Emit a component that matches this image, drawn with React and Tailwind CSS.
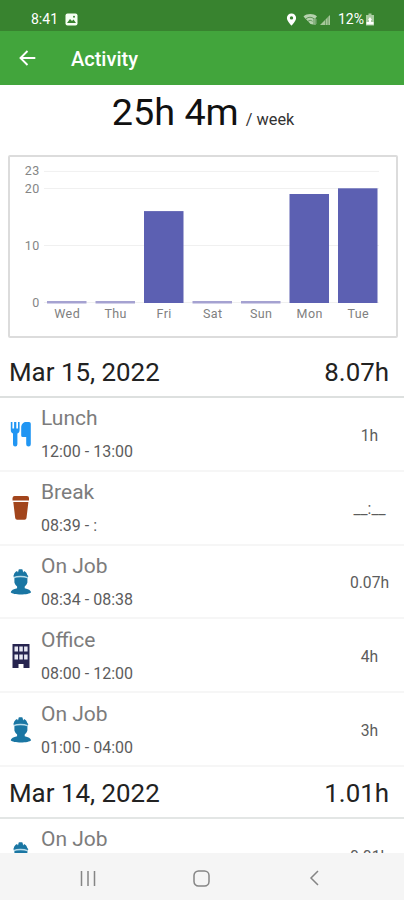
import { useState } from "react";

const week = [
  { day: "Wed", hours: 0 },
  { day: "Thu", hours: 0 },
  { day: "Fri", hours: 16 },
  { day: "Sat", hours: 0 },
  { day: "Sun", hours: 0 },
  { day: "Mon", hours: 19 },
  { day: "Tue", hours: 20 },
];

const days = [
  {
    date: "Mar 15, 2022",
    total: "8.07h",
    items: [
      { type: "lunch", name: "Lunch", time: "12:00 - 13:00", hours: "1h" },
      { type: "break", name: "Break", time: "08:39 - :", hours: "__:__" },
      { type: "job", name: "On Job", time: "08:34 - 08:38", hours: "0.07h" },
      { type: "office", name: "Office", time: "08:00 - 12:00", hours: "4h" },
      { type: "job", name: "On Job", time: "01:00 - 04:00", hours: "3h" },
    ],
  },
  {
    date: "Mar 14, 2022",
    total: "1.01h",
    items: [{ type: "job", name: "On Job", time: "", hours: "0.01h" }],
  },
];

function ActivityIcon({ type }) {
  if (type === "lunch") {
    return (
      <svg width="22" height="26" viewBox="0 0 22 26" fill="#2196f3">
        <path d="M.8 1h1.600v6.500h1.700V1h2.200v6.500H8V1h1.600v7.700c0 2.300-.8 3.300-2.200 3.900v10.600a2.200 2.200 0 0 1-4.400 0V12.600C1.600 12 .8 11 .8 8.700z" />
        <path d="M16 1h3a1.800 1.800 0 0 1 1.800 1.800v20.400a2.300 2.300 0 0 1-4.600 0V16h-3.500a1.500 1.500 0 0 1-1.500-1.500V6.500C11.200 3.500 13 1 16 1z" />
      </svg>
    );
  }
  if (type === "break") {
    return (
      <svg width="22" height="26" viewBox="0 0 22 26" fill="#a2451c">
        <path d="M5 1h12a2 2 0 0 1 2 2v2.600H2.500V3A2.300 2.300 0 0 1 5 1z" />
        <path d="M3.300 7.100h15.100L16.500 23a2 2 0 0 1-2 1.800H7.200a2 2 0 0 1-2-1.800z" />
      </svg>
    );
  }
  if (type === "office") {
    return (
      <svg width="22" height="26" viewBox="0 0 22 26">
        <path d="M2.500 1h17v24h-6v-4h-5v4h-6z" fill="#26244f" />
        <path d="M4.500 3.500H8v5H4.500zM9.300 3.500h3.500v5H9.300zM14.100 3.500h3.500v5h-3.500zM4.500 11.500H8v5H4.500zM9.300 11.500h3.500v5H9.300zM14.100 11.500h3.500v5h-3.500z" fill="#e8e9f3" />
      </svg>
    );
  }
  return (
    <svg width="22" height="26" viewBox="0 0 22 26" fill="#1a76a3">
      <path d="M3.800 6C4.300 3.800 5.600 2.600 7.100 2L8 3.600 8.700.6c.8-.5 3-.5 3.800 0l.7 3 .9-1.600c1.600.7 2.800 2 3.200 4l1.100 1.300-1 1v5.200c-.5 2-1.800 3.200-2.700 4.100v1.600c3.600.7 6.100 2.200 6.400 4-2 3-18.500 3-20.400 0 .3-1.900 2.800-3.300 6.400-4v-1.600c-.9-.9-2.200-2.100-2.700-4.100V8.300l-1.100-1z" />
      <path d="M3.700 8.600c3.500-1.500 10.200-1.500 13.700 0" fill="none" stroke="#b9dcea" strokeWidth="1.500" />
    </svg>
  );
}

function StatusBar() {
  return (
    <div className="flex h-[31px] shrink-0 items-center bg-[#38832f] pl-[31px] pr-[29px] pt-[8px] text-[14px] text-white">
      <span>8:41</span>
      <svg className="ml-[7px]" width="13" height="13" viewBox="0 0 13 13">
        <rect x=".5" y=".5" width="12" height="12" rx="2" fill="#f5fff3" />
        <path d="M2 10l3-4 2 2 1.500-1.500L11 10z" fill="#38832f" />
        <circle cx="9" cy="3.700" r="1" fill="#38832f" />
      </svg>
      <svg className="ml-auto" width="11" height="13" viewBox="0 0 11 13">
        <path fillRule="evenodd" d="M5.500.4a4.500 4.500 0 0 1 4.600 4.500c0 3-4.600 7.700-4.600 7.700S.9 7.900.9 4.900A4.500 4.500 0 0 1 5.500.4zm0 2.800a1.700 1.700 0 1 0 0 3.400 1.700 1.700 0 0 0 0-3.400z" fill="#fff" />
      </svg>
      <svg className="ml-[6px]" width="15" height="13" viewBox="0 0 15 13">
        <path d="M.5 3.500C4 .3 10.500.3 14 3.500L12.500 5v7L7.500 11z" fill="#b6d2ae" />
        <path d="M3 5.800c2.500-2 5.500-2 8 0M5 8.300c1.500-1.200 3-1.200 4.500 0M11 5v7M13.500 6v5" fill="none" stroke="#5f9558" strokeWidth="1" />
      </svg>
      <svg className="ml-[2px]" width="11" height="12" viewBox="0 0 11 12">
        <path d="M10 1v10H0z" fill="#a5c899" />
        <path d="M8 3v8M5.500 5v6" stroke="#5f9558" strokeWidth=".8" />
      </svg>
      <span className="ml-[7px]">12%</span>
      <svg className="ml-[1px]" width="10" height="13" viewBox="0 0 10 13">
        <path d="M3.500.5h3V2H9v10.500H1V2h2.500z" fill="#a8cba0" />
        <path d="M5 4l2 3H6v2h2.500v2.500h-7V9H4V7H3z" fill="#fff" />
      </svg>
    </div>
  );
}

// plot area inside the card: y = 0 sits at 147, one hour is 5.7px
function WeekChart() {
  const base = 147;
  const y = (h) => base - h * 5.7;
  return (
    <div className="ml-[8px] mr-[6px] h-[183px] shrink-0 rounded-[2px] border-2 border-[#dcdcdc]">
      <svg className="block font-['Roboto',sans-serif]" width="386" height="179" viewBox="2 2 386 179">
        {[23, 20, 10, 0].map((tick) => (
          <g key={tick}>
            <line x1="36" x2="371" y1={y(tick) + 0.5} y2={y(tick) + 0.5} stroke="#f0f0f0" />
            <text x="31.500" y={y(tick) + 4.5} textAnchor="end" fontSize="12.500" letterSpacing=".3" fill="#858585">
              {tick}
            </text>
          </g>
        ))}
        {week.map((d, i) => {
          const x = 39 + i * 48.5;
          return (
            <g key={d.day}>
              {d.hours > 0 ? (
                <rect x={x} y={y(d.hours) + 0.3} width="39.500" height={base + 0.7 - y(d.hours)} fill="#5c60b2" />
              ) : (
                <rect x={x} y={base - 1} width="39.500" height="2.500" fill="#a5a2d1" />
              )}
              <text x={x + 20.2} y="163" textAnchor="middle" fontSize="12.500" letterSpacing=".4" fill="#808080">
                {d.day}
              </text>
            </g>
          );
        })}
      </svg>
    </div>
  );
}

function DaySection({ day, first }) {
  return (
    <section className="shrink-0">
      <div
        className={
          first
            ? "flex h-[60px] items-center justify-between border-b-2 border-[#dde0df] pt-[10px] pl-[9px] pr-[15px] text-[25.900px] text-[#222]"
            : "flex h-[52px] items-center justify-between border-b-2 border-[#e3e6e5] pt-[3px] pl-[9px] pr-[15px] text-[25.900px] text-[#222]"
        }
      >
        <span>{day.date}</span>
        <span>{day.total}</span>
      </div>
      {day.items.map((it, i) => (
        <div key={i} className="flex h-[73.8px] items-center border-b-2 border-[#f6f6f6] pt-px pl-[10px]">
          <ActivityIcon type={it.type} />
          <div className="ml-[9px] flex-1">
            <div className="text-[21px] leading-[28px] text-[#7c7c7c]">{it.name}</div>
            <div className="mt-[8px] h-[24px] text-[16px] leading-[24px] text-[#5c5c5c]">{it.time}</div>
          </div>
          <div className="w-[69px] pt-[2px] text-center text-[15.700px] text-[#5c5c5c]">{it.hours}</div>
        </div>
      ))}
    </section>
  );
}

export default function App() {
  const [entries] = useState(days);

  return (
    <div className="flex h-[900px] w-[404px] flex-col overflow-hidden bg-white font-['Roboto',sans-serif]">
      <StatusBar />
      <header className="flex h-[54px] shrink-0 items-center bg-[#42a53c] pl-[19px] text-white">
        <svg width="17" height="16" viewBox="0 0 17 16" fill="none" stroke="#fff" strokeWidth="1.900">
          <path d="M16.300 8H1.700M8.500 1L1.500 8l7 7" />
        </svg>
        <h1 className="ml-[35px] pt-[2px] text-[20px] font-medium">Activity</h1>
      </header>

      <main className="flex min-h-0 flex-1 flex-col overflow-hidden">
        <div className="flex h-[70px] shrink-0 items-baseline justify-center pt-[3px] pl-[2px] text-[#111]">
          <span className="text-[37.800px] leading-[48px]">25h 4m</span>
          <span className="ml-[7px] text-[16.300px] text-[#333]">/ week</span>
        </div>
        <WeekChart />
        {entries.map((day, i) => (
          <DaySection key={day.date} day={day} first={i === 0} />
        ))}
      </main>

      <nav className="flex h-[47px] shrink-0 items-center bg-[#f5f5f5] pl-[80px] pt-[3px]">
        <svg width="16" height="16" viewBox="0 0 16 16" stroke="#858585" strokeWidth="1.500">
          <path d="M1.500 1v15M8 1v15M14.500 1v15" />
        </svg>
        <svg className="ml-[97px]" width="17" height="17" viewBox="0 0 17 17" fill="none" stroke="#858585" strokeWidth="1.500">
          <rect x="1" y="1" width="15" height="15" rx="4.500" />
        </svg>
        <svg className="ml-[99px]" width="10" height="16" viewBox="0 0 10 16" fill="none" stroke="#858585" strokeWidth="1.500">
          <path d="M9 1L2 8l7 7" />
        </svg>
      </nav>
    </div>
  );
}
